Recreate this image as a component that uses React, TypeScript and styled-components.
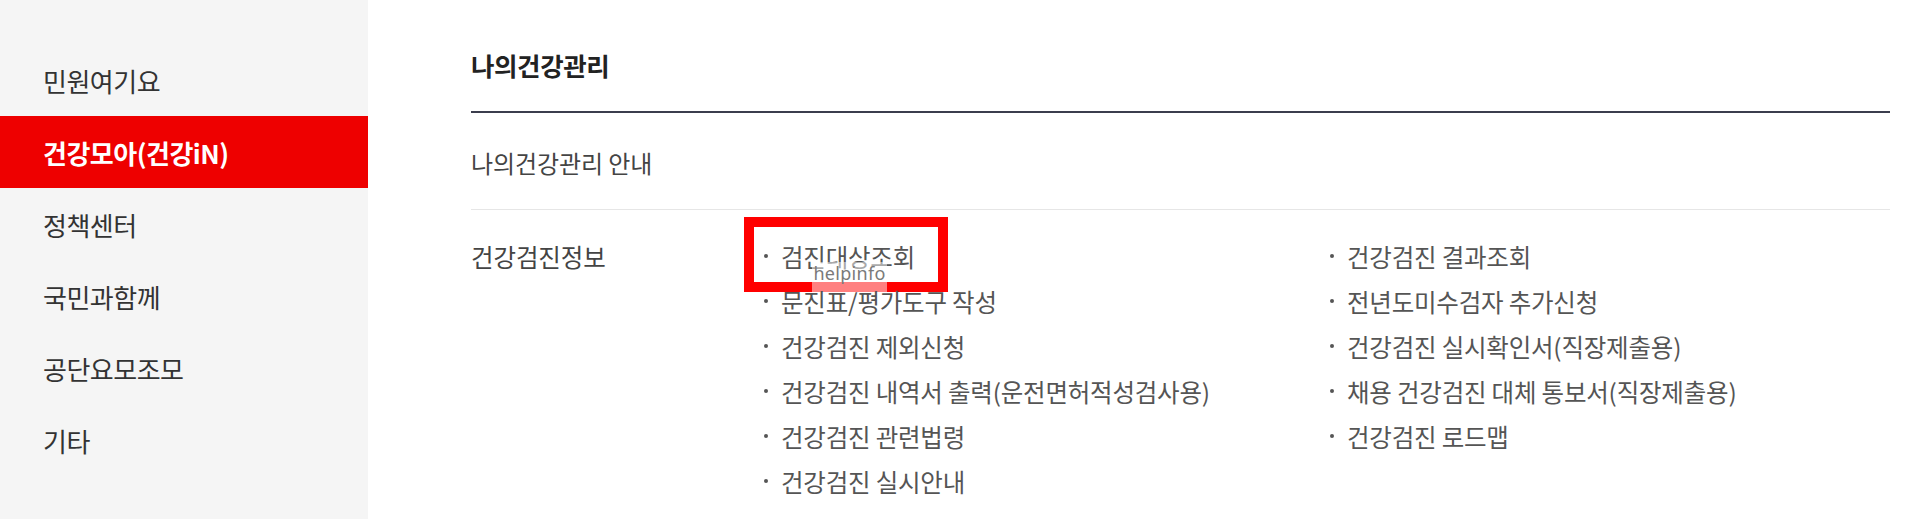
import React from 'react'
import styled, { createGlobalStyle } from 'styled-components'

const GlobalStyle = createGlobalStyle`
  html, body {
    margin: 0;
    padding: 0;
    background: #fff;
  }
  body {
    font-family: 'Noto Sans CJK KR', 'Noto Sans', sans-serif;
    -webkit-font-smoothing: antialiased;
  }
  * {
    box-sizing: border-box;
  }
`

const menus = ['민원여기요', '건강모아(건강iN)', '정책센터', '국민과함께', '공단요모조모', '기타']

const leftItems = [
  '검진대상조회',
  '문진표/평가도구 작성',
  '건강검진 제외신청',
  '건강검진 내역서 출력(운전면허적성검사용)',
  '건강검진 관련법령',
  '건강검진 실시안내',
]

const rightItems = [
  '건강검진 결과조회',
  '전년도미수검자 추가신청',
  '건강검진 실시확인서(직장제출용)',
  '채용 건강검진 대체 통보서(직장제출용)',
  '건강검진 로드맵',
]

const App: React.FC = () => {
  return (
    <>
      <GlobalStyle />
      <Page>
        <Sidebar>
          {menus.map((m) => (
            <MenuItem key={m} active={m === '건강모아(건강iN)'}>
              {m}
            </MenuItem>
          ))}
        </Sidebar>
        <Main>
          <Title>나의건강관리</Title>
          <InfoRow>나의건강관리 안내</InfoRow>
          <Section>
            <SectionLabel>건강검진정보</SectionLabel>
            <Columns>
              <List>
                {leftItems.map((item, i) => (
                  <Item key={item}>
                    {item}
                    {i === 0 && (
                      <Highlight>
                        <Watermark>helpinfo</Watermark>
                      </Highlight>
                    )}
                  </Item>
                ))}
              </List>
              <List>
                {rightItems.map((item) => (
                  <Item key={item}>{item}</Item>
                ))}
              </List>
            </Columns>
          </Section>
        </Main>
      </Page>
    </>
  )
}

const Page = styled.div`
  display: flex;
  width: 1920px;
  height: 519px;
  overflow: hidden;
`

const Sidebar = styled.nav`
  width: 368px;
  flex-shrink: 0;
  background-color: #f5f5f5;
  padding-top: 44px;
  display: flex;
  flex-direction: column;
`

const MenuItem = styled.div<{ active?: boolean }>`
  height: 72px;
  display: flex;
  align-items: center;
  padding-left: 43px;
  font-size: 26px;
  letter-spacing: -0.5px;
  font-weight: ${({ active }) => (active ? 700 : 400)};
  color: ${({ active }) => (active ? '#fff' : '#333')};
  background-color: ${({ active }) => (active ? '#ee0000' : 'transparent')};
`

const Main = styled.main`
  flex: 1;
  padding: 0 30px 0 103px;
`

const Title = styled.h2`
  margin: 0;
  padding: 49px 0 30px;
  line-height: 32px;
  font-size: 25.5px;
  font-weight: 700;
  letter-spacing: -0.4px;
  color: #222;
  border-bottom: 2px solid #3b3d4d;
`

const InfoRow = styled.div`
  padding: 34px 0 30px;
  line-height: 32px;
  font-size: 24px;
  letter-spacing: -0.1px;
  color: #444;
  border-bottom: 1px solid #e6e6e6;
`

const Section = styled.div`
  display: flex;
  padding-top: 24px;
`

const SectionLabel = styled.div`
  width: 293px;
  flex-shrink: 0;
  line-height: 45px;
  font-size: 24.5px;
  letter-spacing: -0.1px;
  color: #444;
`

const Columns = styled.div`
  display: grid;
  grid-template-columns: 566px 1fr;
`

const List = styled.ul`
  margin: 0;
  padding: 0;
  list-style: none;
`

const Item = styled.li`
  position: relative;
  padding-left: 17px;
  line-height: 45px;
  font-size: 24.5px;
  letter-spacing: -0.2px;
  color: #555;

  &::before {
    content: '';
    position: absolute;
    left: 0;
    top: 20px;
    width: 4px;
    height: 4px;
    border-radius: 50%;
    background-color: #555;
  }
`

const Highlight = styled.span`
  position: absolute;
  left: -20px;
  top: -17px;
  width: 204px;
  height: 75px;
  border: 10px solid #ff0000;
`

const Watermark = styled.span`
  position: absolute;
  left: 58px;
  bottom: -10px;
  width: 75px;
  height: 30px;
  text-align: center;
  background-color: rgba(255, 255, 255, 0.5);
  font-family: 'Noto Sans', 'Liberation Sans', sans-serif;
  font-size: 18px;
  line-height: 22px;
  letter-spacing: 0.3px;
  color: #7a7a7a;
`

export default App
